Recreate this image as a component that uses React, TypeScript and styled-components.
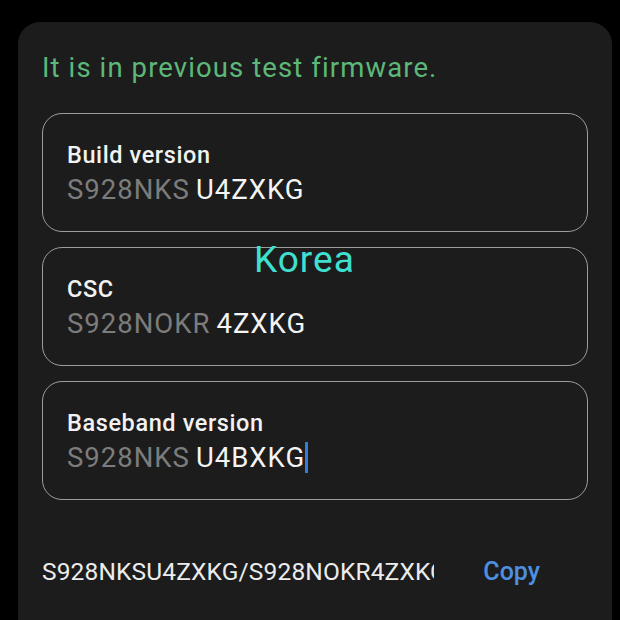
import styled, { createGlobalStyle } from "styled-components";

const GlobalStyle = createGlobalStyle`
  html, body {
    margin: 0;
    padding: 0;
    background: #000;
    font-family: Roboto, "Noto Sans", sans-serif;
  }
`;

const Screen = styled.div`
  width: 620px;
  height: 620px;
  overflow: hidden;
  background: #000;
  padding: 22px 8px 0 18px;
  box-sizing: border-box;
`;

const Panel = styled.div`
  position: relative;
  background: #1c1c1c;
  border-radius: 22px;
  height: 640px;
  padding: 27px 24px 0 24px;
  box-sizing: border-box;
`;

const Notice = styled.div`
  color: #5cb879;
  font-size: 27.5px;
  letter-spacing: 1.1px;
  line-height: 38px;
  margin-bottom: 26px;
`;

const CardList = styled.div`
  display: flex;
  flex-direction: column;
  gap: 15px;
  width: 546px;
`;

const Card = styled.div`
  border: 1.5px solid #9c9c9c;
  border-radius: 20px;
  height: 119px;
  box-sizing: border-box;
  padding: 26px 24px 0 24px;
`;

const Label = styled.div`
  color: #f2f2f2;
  font-size: 23.5px;
  font-weight: 500;
  letter-spacing: 0.6px;
  line-height: 31px;
`;

const Value = styled.div`
  display: flex;
  align-items: center;
  gap: 6px;
  font-size: 27.5px;
  line-height: 37px;
  letter-spacing: 1px;
`;

const Part = styled.span<{ $dim?: boolean }>`
  color: ${(p) => (p.$dim ? "#7c7c7c" : "#f4f4f4")};
`;

const Caret = styled.span`
  display: inline-block;
  width: 3px;
  height: 31px;
  background: #2f7de1;
  margin-left: -6px;
`;

const Tag = styled.div`
  position: absolute;
  left: 236px;
  top: 217px;
  color: #3fe0d0;
  font-size: 37px;
  letter-spacing: 1px;
  line-height: 42px;
`;

const Footer = styled.div`
  display: flex;
  align-items: center;
  margin-top: 57px;
  width: 498px;
`;

const Combined = styled.div`
  color: #ececec;
  font-size: 24.5px;
  width: 392px;
  white-space: nowrap;
  overflow: hidden;
  letter-spacing: 0.15px;
`;

const CopyButton = styled.div`
  color: #4d8fe0;
  font-size: 25px;
  font-weight: 500;
  margin-left: auto;
`;

const cards = [
  { label: "Build version", dim: "S928NKS", bright: "U4ZXKG" },
  { label: "CSC", dim: "S928NOKR", bright: "4ZXKG" },
  { label: "Baseband version", dim: "S928NKS", bright: "U4BXKG", caret: true },
];

export default function App() {
  return (
    <>
      <GlobalStyle />
      <Screen>
        <Panel>
          <Notice>It is in previous test firmware.</Notice>
          <CardList>
            {cards.map((c) => (
              <Card key={c.label}>
                <Label>{c.label}</Label>
                <Value>
                  <Part $dim>{c.dim}</Part>
                  <Part>{c.bright}</Part>
                  {c.caret ? <Caret /> : null}
                </Value>
              </Card>
            ))}
          </CardList>
          <Tag>Korea</Tag>
          <Footer>
            <Combined>S928NKSU4ZXKG/S928NOKR4ZXKG</Combined>
            <CopyButton>Copy</CopyButton>
          </Footer>
        </Panel>
      </Screen>
    </>
  );
}
